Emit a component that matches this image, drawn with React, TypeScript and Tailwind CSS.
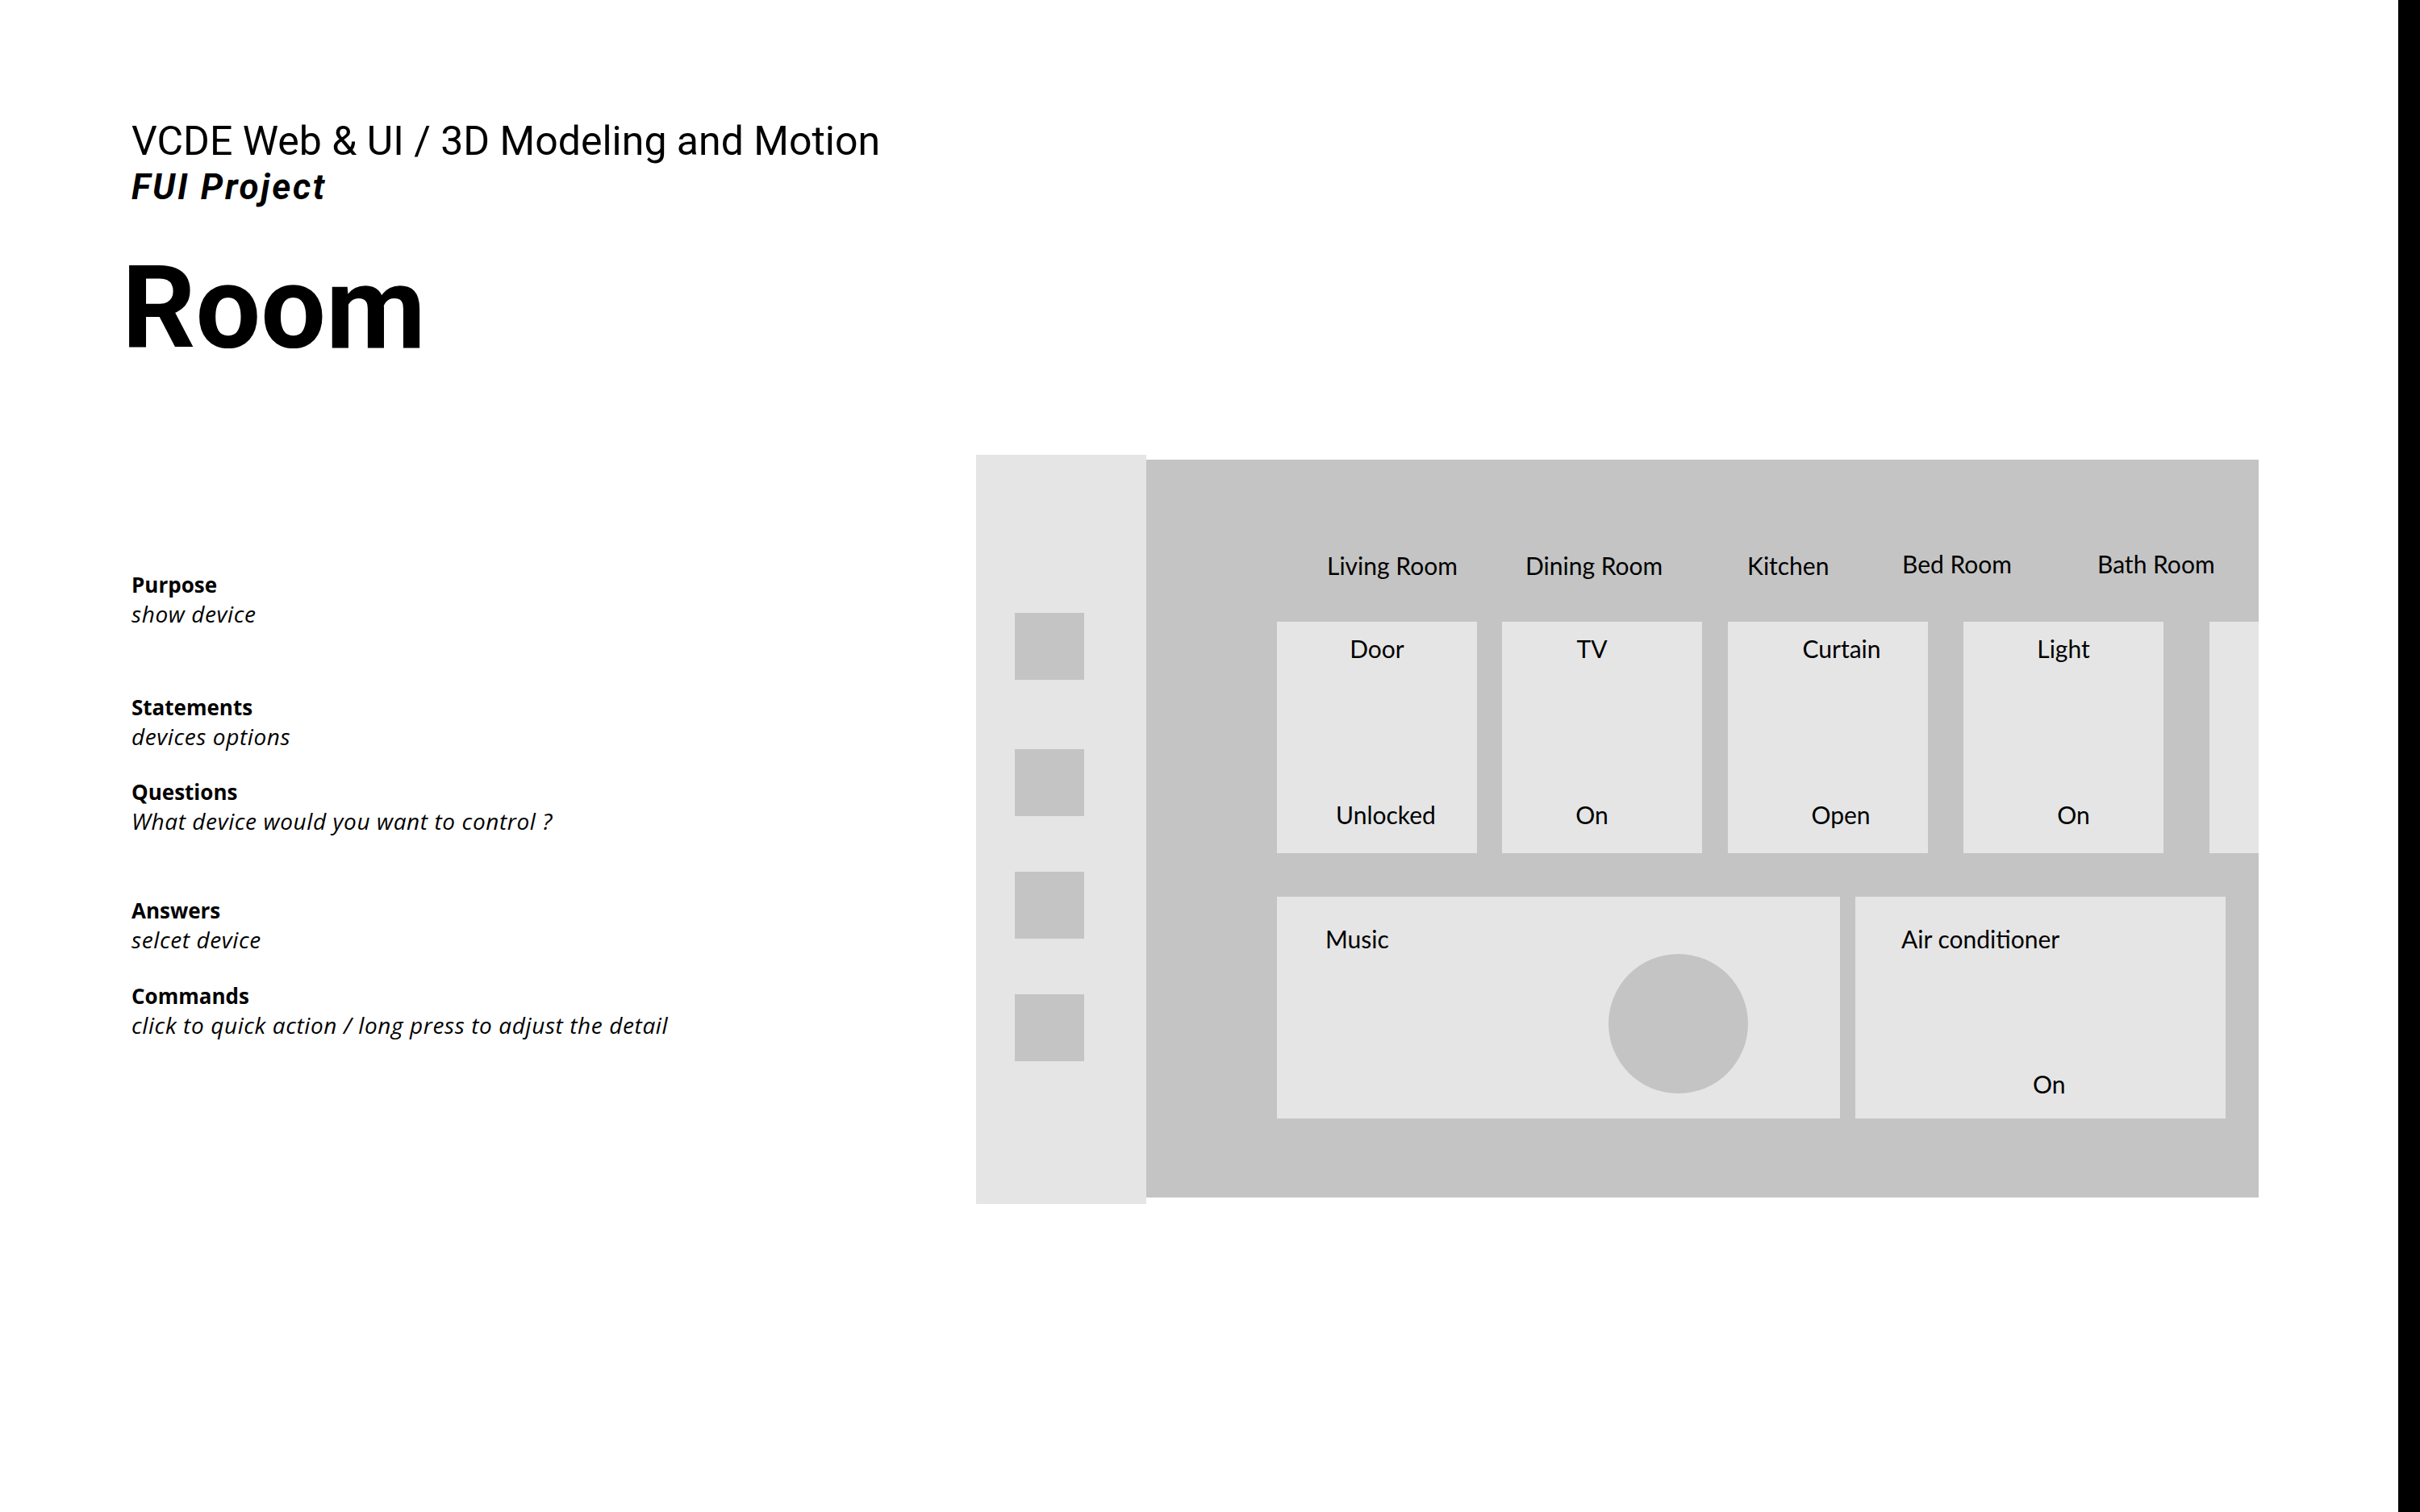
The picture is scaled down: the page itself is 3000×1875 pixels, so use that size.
import React from "react";

const labelFont = "font-['Open_Sans',sans-serif]";

function Group({ label, value, className }: { label: string; value: string; className?: string }) {
  return (
    <div className={className}>
      <div className={`${labelFont} font-bold text-[26px] leading-[36px] text-black`}>{label}</div>
      <div className={`${labelFont} italic font-normal text-[28px] leading-[36px] text-black tracking-[0.6px]`}>{value}</div>
    </div>
  );
}

function RoomLabel({ text, className }: { text: string; className: string }) {
  return <div className={`shrink-0 font-['Lato',sans-serif] text-[30px] leading-[36px] text-black ${className}`}>{text}</div>;
}

type CardProps = {
  title: string;
  status: string;
  className: string;
  titleShift: string;
  statusShift: string;
};

function DeviceCard({ title, status, className, titleShift, statusShift }: CardProps) {
  return (
    <div className={`shrink-0 w-[248px] h-[287px] bg-[#e5e5e5] flex flex-col pt-[15px] ${className}`}>
      <div className={`text-center font-['Lato',sans-serif] text-[30px] leading-[36px] text-black ${titleShift}`}>{title}</div>
      <div className={`mt-[170px] text-center font-['Lato',sans-serif] text-[30px] leading-[36px] text-black ${statusShift}`}>{status}</div>
    </div>
  );
}

export default function App() {
  return (
    <div className="flex w-[3000px] h-[1875px] bg-white overflow-hidden">
      <div className="flex flex-1">
        <div className="w-[1210px] shrink-0 pl-[163px] pt-[146px]">
          <h2 className="font-['Roboto',sans-serif] font-normal text-[50px] leading-[58px] text-black">
            VCDE Web &amp; UI / 3D Modeling and Motion
          </h2>
          <p className="mt-[2px] font-['Roboto',sans-serif] font-bold italic text-[44px] leading-[52px] tracking-[2.7px] text-black">
            FUI Project
          </p>
          <h1 className="mt-[53px] -ml-[12px] font-['Roboto',sans-serif] font-bold text-[143px] leading-[143px] text-black">
            Room
          </h1>
          <div className="mt-[253px] flex flex-col">
            <Group label="Purpose" value="show device" />
            <Group label="Statements" value="devices options" className="mt-[80px]" />
            <Group label="Questions" value="What device would you want to control ?" className="mt-[33px]" />
            <Group label="Answers" value="selcet device" className="mt-[75px]" />
            <Group label="Commands" value="click to quick action / long press to adjust the detail" className="mt-[34px]" />
          </div>
        </div>

        <div className="mt-[564px] flex items-start">
          {/* sidebar */}
          <div className="w-[211px] h-[929px] bg-[#e5e5e5] flex flex-col pl-[48px] pt-[196px]">
            <div className="w-[86px] h-[83px] bg-[#c4c4c4]" />
            <div className="mt-[86px] w-[86px] h-[83px] bg-[#c4c4c4]" />
            <div className="mt-[69px] w-[86px] h-[83px] bg-[#c4c4c4]" />
            <div className="mt-[69px] w-[86px] h-[83px] bg-[#c4c4c4]" />
          </div>

          {/* main panel */}
          <div className="mt-[6px] w-[1379px] h-[915px] bg-[#c4c4c4] overflow-hidden flex flex-col">
            <div className="flex items-start pt-[113px] pl-[224px] h-[201px]">
              <RoomLabel text="Living Room" className="w-[246px]" />
              <RoomLabel text="Dining Room" className="w-[275px]" />
              <RoomLabel text="Kitchen" className="w-[192px]" />
              <RoomLabel text="Bed Room" className="w-[242px] -mt-[2px]" />
              <RoomLabel text="Bath Room" className="-mt-[2px]" />
            </div>

            <div className="flex pl-[162px]">
              <DeviceCard title="Door" status="Unlocked" className="" titleShift="" statusShift="pl-[22px]" />
              <DeviceCard title="TV" status="On" className="ml-[31px]" titleShift="pr-[25px]" statusShift="pr-[25px]" />
              <DeviceCard title="Curtain" status="Open" className="ml-[32px]" titleShift="pl-[34px]" statusShift="pl-[32px]" />
              <DeviceCard title="Light" status="On" className="ml-[44px] w-[247px]" titleShift="" statusShift="pl-[25px]" />
              <div className="shrink-0 ml-[57px] w-[248px] h-[287px] bg-[#e5e5e5]" />
            </div>

            <div className="flex pl-[162px] mt-[54px]">
              <div className="shrink-0 w-[698px] h-[275px] bg-[#e5e5e5] flex flex-col pt-[34px] pl-[60px]">
                <div className="font-['Lato',sans-serif] text-[30px] leading-[36px] text-black">Music</div>
                <div className="mt-[1px] ml-[351px] w-[173px] h-[173px] rounded-full bg-[#c4c4c4]" />
              </div>
              <div className="shrink-0 ml-[19px] w-[459px] h-[275px] bg-[#e5e5e5] flex flex-col justify-between pt-[34px] pb-[25px]">
                <div className="pl-[57px] font-['Lato',sans-serif] text-[30px] leading-[36px] text-black">Air conditioner</div>
                <div className="pl-[220px] font-['Lato',sans-serif] text-[30px] leading-[36px] text-black">On</div>
              </div>
            </div>
          </div>
        </div>
      </div>
      <div className="w-[27px] shrink-0 bg-black" />
    </div>
  );
}
